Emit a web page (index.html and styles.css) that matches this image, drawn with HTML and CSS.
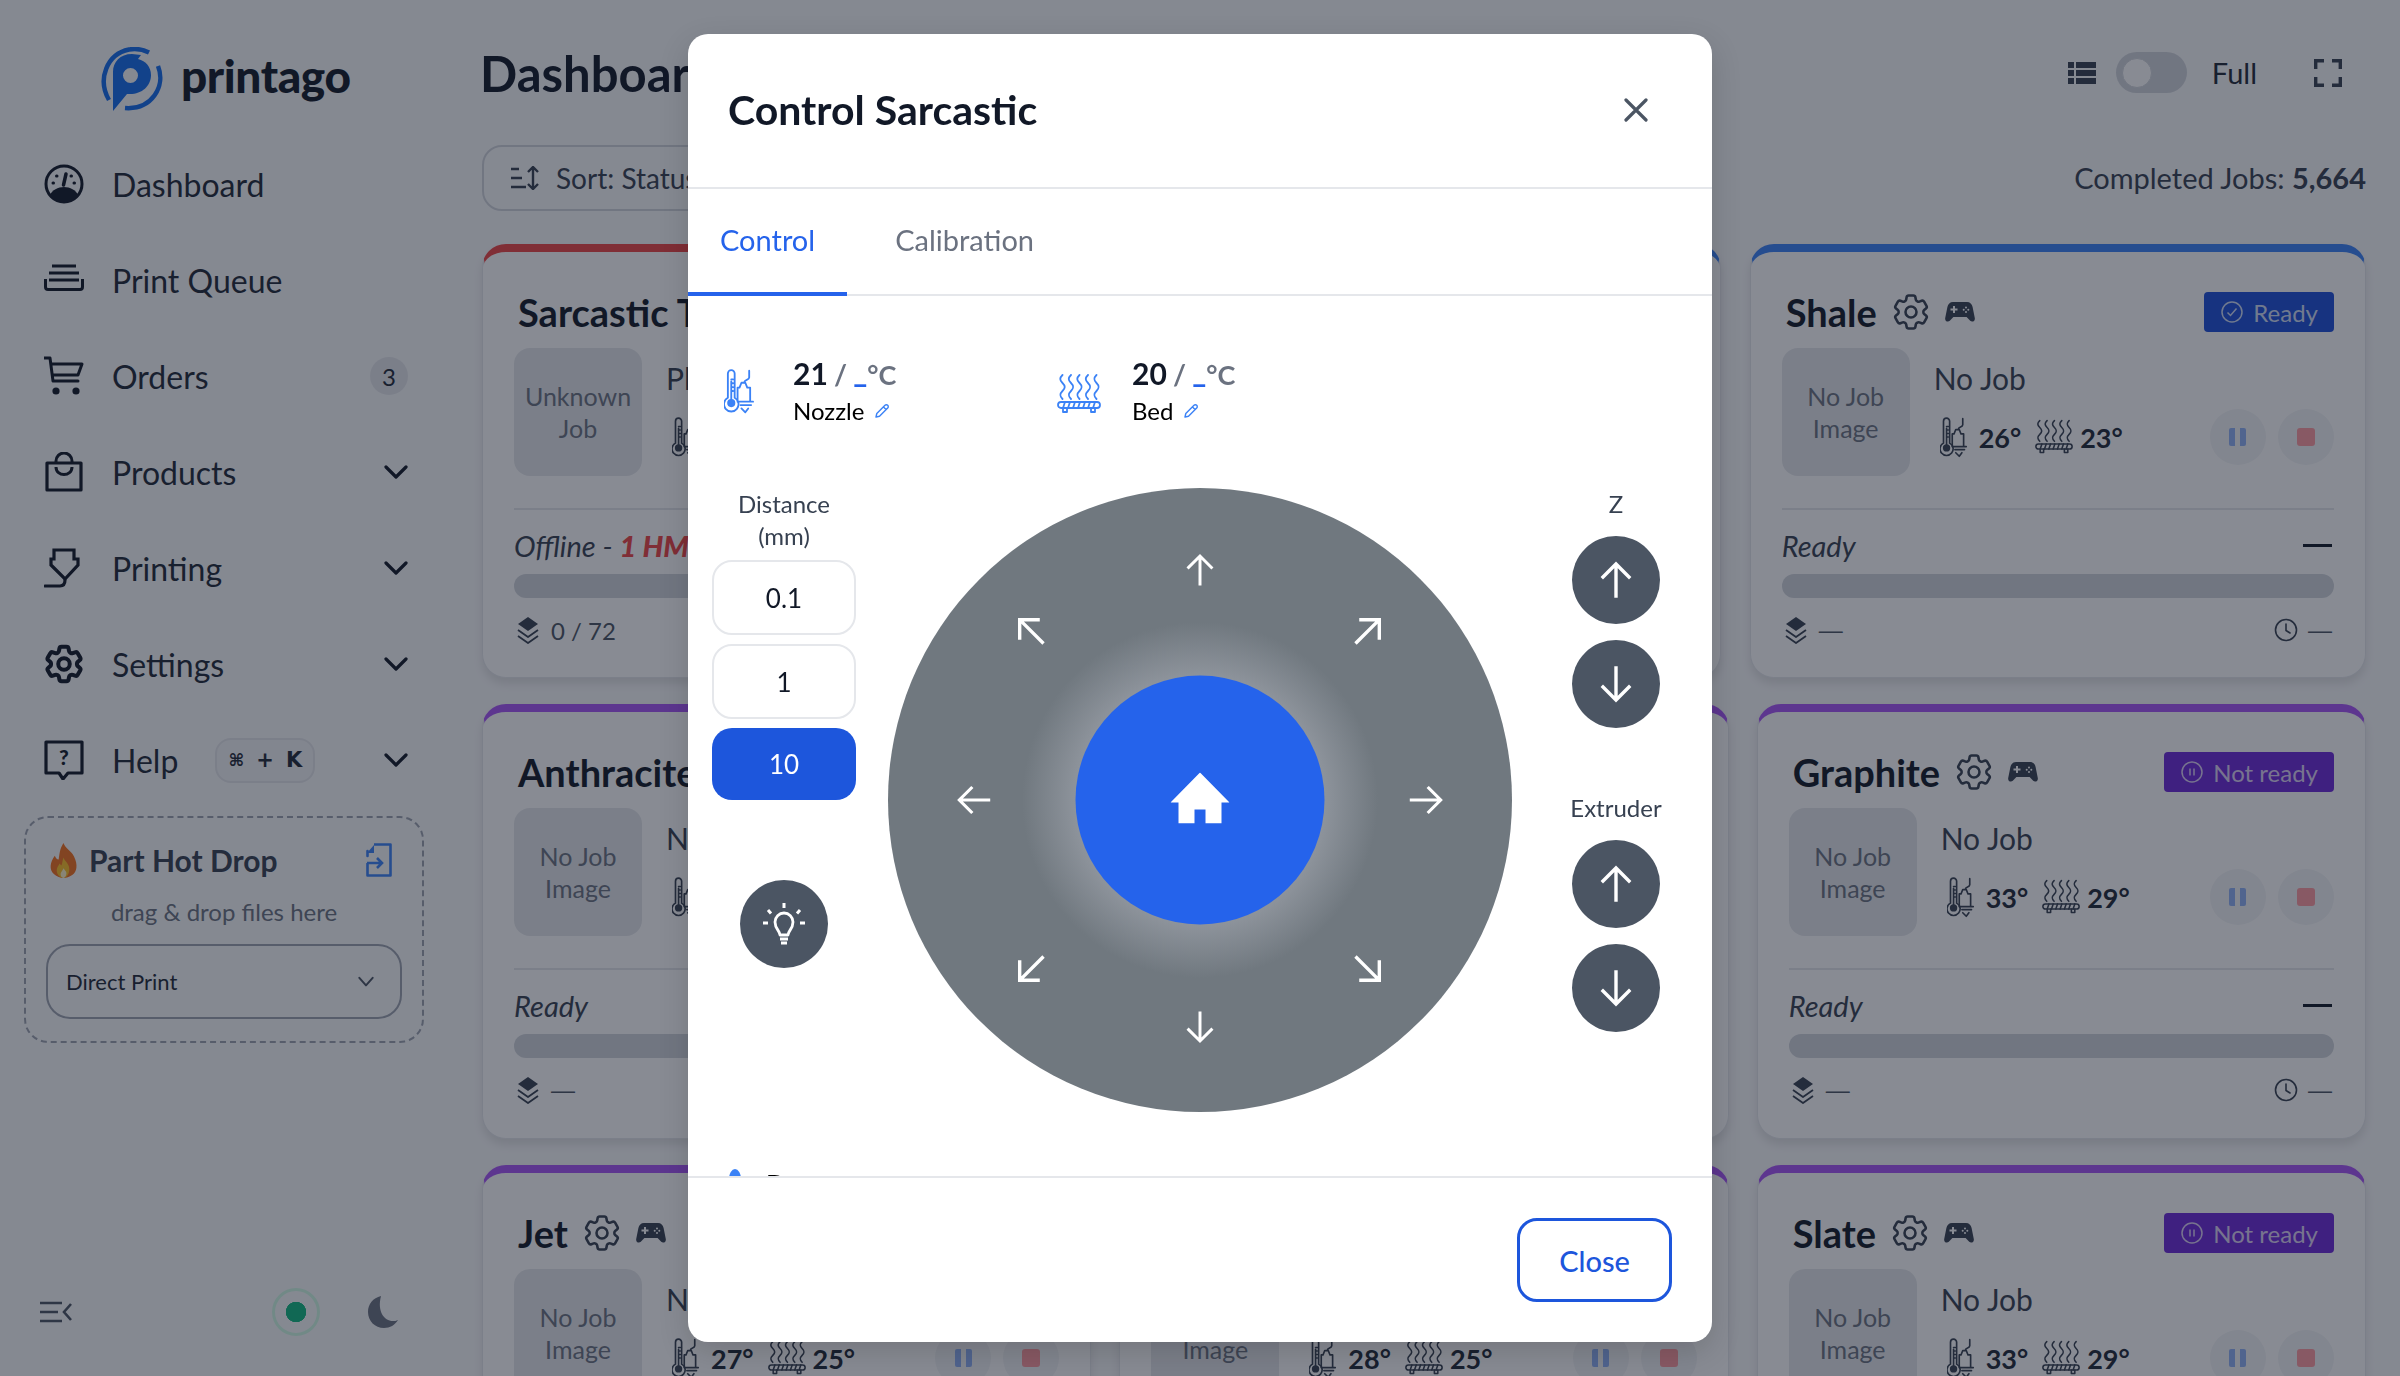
FILE: index.html

```html
<!DOCTYPE html>
<html lang="en">
<head>
  <meta charset="UTF-8">
  <title>Printago Dashboard</title>
  <link rel="stylesheet" href="styles.css">
</head>
<body>
  <svg class="icon-defs" width="0" height="0">
    <defs>
      <symbol id="i-gear" viewBox="0 0 24 24"><path fill="none" stroke="currentColor" stroke-linejoin="round" d="M9.594 3.94c.09-.542.56-.94 1.11-.94h2.593c.55 0 1.02.398 1.11.94l.213 1.281c.063.374.313.686.645.87.074.04.147.083.22.127.325.196.72.257 1.075.124l1.217-.456a1.125 1.125 0 0 1 1.37.49l1.296 2.247a1.125 1.125 0 0 1-.26 1.431l-1.003.827c-.293.241-.438.613-.43.992a7.723 7.723 0 0 1 0 .255c-.008.378.137.75.43.991l1.004.827c.424.35.534.955.26 1.43l-1.298 2.247a1.125 1.125 0 0 1-1.369.491l-1.217-.456c-.355-.133-.75-.072-1.076.124a6.47 6.47 0 0 1-.22.128c-.331.183-.581.495-.644.869l-.213 1.281c-.09.543-.56.94-1.11.94h-2.594c-.55 0-1.019-.398-1.11-.94l-.213-1.281c-.062-.374-.312-.686-.644-.87a6.52 6.52 0 0 1-.22-.127c-.325-.196-.72-.257-1.076-.124l-1.217.456a1.125 1.125 0 0 1-1.369-.49l-1.297-2.247a1.125 1.125 0 0 1 .26-1.431l1.004-.827c.292-.24.437-.613.43-.991a6.932 6.932 0 0 1 0-.255c.007-.38-.138-.751-.43-.992l-1.004-.827a1.125 1.125 0 0 1-.26-1.43l1.297-2.247a1.125 1.125 0 0 1 1.37-.491l1.216.456c.356.133.751.072 1.076-.124.072-.044.146-.086.22-.128.332-.183.582-.495.644-.869l.214-1.28Z"/><circle cx="12" cy="12" r="3" fill="none" stroke="currentColor"/></symbol>
      <symbol id="i-pad" viewBox="0 0 30 22"><path fill="currentColor" fill-rule="evenodd" d="M8 1h14c3 0 5 2 5.600 5l2.200 11c.5 3-2.600 4.600-4.600 2.800L21.600 16H8.400l-3.600 3.800C2.800 21.600-.3 20 .2 17L2.400 6C3 3 5 1 8 1ZM8 5v2.500H5.500v2H8V12h2V9.500h2.500v-2H10V5ZM21 5.500a1 1 0 1 0 0 2 1 1 0 0 0 0-2Zm-2.300 2.300a1 1 0 1 0 0 2 1 1 0 0 0 0-2Zm4.600 0a1 1 0 1 0 0 2 1 1 0 0 0 0-2ZM21 10a1 1 0 1 0 0 2 1 1 0 0 0 0-2Z"/></symbol>
      <symbol id="i-nozzle" viewBox="0 0 32 46"><g fill="none" stroke="currentColor" stroke-width="1.900" stroke-linecap="round" stroke-linejoin="round"><path d="M4 30V5a3.500 3.500 0 0 1 7 0v25a7.500 7.500 0 1 1-7 0Z"/><path d="M7.500 13v22M7.500 11h2M7.500 15h2M7.500 19h2M7.500 23h2"/><path d="M14 19.500h2l2-5h4l2 5h3v14M14 19.500v13"/><path d="M21 14c0-3 5-2 5-5V2"/><path d="M14 34h16M17 37.500h11M18 41l4 4 3-4"/></g><circle cx="7.500" cy="35.500" r="4.200" fill="currentColor"/></symbol>
      <symbol id="i-bed" viewBox="0 0 44 40"><g fill="none" stroke="currentColor" stroke-width="1.800" stroke-linecap="round" stroke-linejoin="round"><path d="M5.500 1c-3 3-3 5 0 8s3 5 0 8-3 5 0 8"/><path d="M14 1c-3 3-3 5 0 8s3 5 0 8-3 5 0 8M22.500 1c-3 3-3 5 0 8s3 5 0 8-3 5 0 8M31 1c-3 3-3 5 0 8s3 5 0 8-3 5 0 8M39.500 1c-3 3-3 5 0 8s3 5 0 8-3 5 0 8"/><rect x="1" y="28" width="42" height="6" rx="3"/><path d="M6 34l2-6M11 34l2-6M16 34l2-6M21 34l2-6M26 34l2-6M31 34l2-6M36 34l2-6M6 34v4h4v-4M34 34v4h4v-4"/></g></symbol>
      <symbol id="i-layers" viewBox="0 0 22 28"><path fill="currentColor" d="M11 1l10 7-10 7L1 8Z"/><path fill="none" stroke="currentColor" stroke-width="1.800" stroke-linejoin="round" d="M1 14l10 7 10-7M1 20l10 7 10-7"/></symbol>
      <symbol id="i-clock" viewBox="0 0 24 24"><circle cx="12" cy="12" r="10.500" fill="none" stroke="currentColor" stroke-width="1.600"/><path fill="none" stroke="currentColor" stroke-width="1.600" stroke-linecap="round" d="M12 6v6.500l4 2.500"/></symbol>
      <symbol id="i-ready" viewBox="0 0 24 24"><circle cx="12" cy="12" r="10" fill="none" stroke="currentColor" stroke-width="1.500"/><path fill="none" stroke="currentColor" stroke-width="1.500" d="M7.500 12.500l3 3 6-7"/></symbol>
      <symbol id="i-notready" viewBox="0 0 24 24"><circle cx="12" cy="12" r="10" fill="none" stroke="currentColor" stroke-width="1.500"/><path fill="none" stroke="currentColor" stroke-width="1.500" d="M10 8.500v7M14 8.500v7"/></symbol>
      <symbol id="i-chev" viewBox="0 0 24 16"><path fill="none" stroke="currentColor" stroke-width="3.200" stroke-linecap="round" stroke-linejoin="round" d="M2 3l10 10L22 3"/></symbol>
      <symbol id="i-arrow" viewBox="0 0 24 24"><path fill="none" stroke="currentColor" stroke-width="1.700" stroke-linecap="square" d="M12 20V4.500M5.500 10.500L12 4l6.500 6.500"/></symbol>
    </defs>
  </svg>

  <div class="app">
    <aside class="sidebar">
      <div class="logo">
        <svg class="logo-mark" viewBox="0 0 64 64">
          <path fill="none" stroke="currentColor" stroke-width="4.500" d="M10 53C-2 32 8 7 30 2.500c8-1.500 14 0 20 3"/>
          <path fill="none" stroke="currentColor" stroke-width="4.500" d="M59 19c8 20-6 44-33 42"/>
          <path fill="currentColor" fill-rule="evenodd" d="M14 64V25C14 15 21 7 33 7l9 1-3 4c8 2 13 8 13 16 0 11-9 19-21 19h-3ZM31.500 21a7.500 7.500 0 1 0 0 15 7.500 7.500 0 0 0 0-15Z"/>
        </svg>
        <span class="logo-text">printago</span>
      </div>

      <nav class="nav">
        <a class="nav-item">
          <svg class="nav-icon" viewBox="0 0 40 40"><circle cx="20" cy="20" r="18" fill="none" stroke="currentColor" stroke-width="3"/><path fill="currentColor" d="M6 31c2-5 8-8 14-8s12 3 14 8c-3 4-8 7-14 7S9 35 6 31Z"/><path fill="none" stroke="currentColor" stroke-width="3.500" stroke-linecap="round" d="M19.500 21l2.500-11"/><path fill="none" stroke="currentColor" stroke-width="3" stroke-linecap="round" d="M9 19h.5M12.500 12h.5M30 19h.5M27 12h.5"/></svg>
          <span>Dashboard</span>
        </a>
        <a class="nav-item">
          <svg class="nav-icon" viewBox="0 0 40 40"><path fill="none" stroke="currentColor" stroke-width="3" d="M8 6h24M5 13h30M5 20h30"/><path fill="none" stroke="currentColor" stroke-width="3" stroke-linejoin="round" d="M1.500 19v8c0 1.500 1 2.500 2.500 2.500h32c1.500 0 2.500-1 2.500-2.500v-8"/></svg>
          <span>Print Queue</span>
        </a>
        <a class="nav-item">
          <svg class="nav-icon" viewBox="0 0 40 40"><path fill="none" stroke="currentColor" stroke-width="3" stroke-linejoin="round" stroke-linecap="round" d="M0 2h6l3 23h25M7 8h31l-4 11H9"/><circle cx="12" cy="35" r="3.600" fill="currentColor"/><circle cx="32" cy="35" r="3.600" fill="currentColor"/></svg>
          <span>Orders</span>
          <span class="count">3</span>
        </a>
        <a class="nav-item">
          <svg class="nav-icon" viewBox="0 0 40 40"><path fill="none" stroke="currentColor" stroke-width="3.200" stroke-linejoin="round" d="M3 11h34v27H3Z"/><path fill="none" stroke="currentColor" stroke-width="3" d="M12 11V9a8 8 0 0 1 16 0v2M12 15c0 10 16 10 16 0"/></svg>
          <span>Products</span>
          <svg class="chev"><use href="#i-chev"/></svg>
        </a>
        <a class="nav-item">
          <svg class="nav-icon" viewBox="0 0 40 40"><path fill="none" stroke="currentColor" stroke-width="3.200" stroke-linejoin="miter" d="M10 2h20v9h4v6L21 31 7 17v-6h3Z"/><path fill="none" stroke="currentColor" stroke-width="3.200" stroke-linecap="round" d="M1 38h15c3 0 5-2 5-6"/></svg>
          <span>Printing</span>
          <svg class="chev"><use href="#i-chev"/></svg>
        </a>
        <a class="nav-item">
          <svg class="nav-icon nav-icon-gear"><use href="#i-gear"/></svg>
          <span>Settings</span>
          <svg class="chev"><use href="#i-chev"/></svg>
        </a>
        <a class="nav-item">
          <svg class="nav-icon" viewBox="0 0 40 40"><path fill="none" stroke="currentColor" stroke-width="3.200" stroke-linejoin="round" d="M2 2h36v31H24l-5 6-4-6H2Z"/><text class="help-mark" x="20" y="25" text-anchor="middle">?</text></svg>
          <span>Help</span>
          <kbd class="shortcut"><span class="shortcut-cmd">⌘</span><span>+</span><span>K</span></kbd>
          <svg class="chev"><use href="#i-chev"/></svg>
        </a>
      </nav>

      <section class="hot-drop">
        <div class="hot-drop-head">
          <svg class="flame" viewBox="0 0 30 36"><path fill="#f2701d" d="M15 0c2 6 8 8 11 14 4 8 3 16-2 19-3 2-6 3-9 3s-7-1-10-4C0 27 1 20 6 13c1 2 2 4 4 4 1-6 1-11 5-17Z"/><path fill="#fbbf24" d="M15 15c1 4 6 6 6 12 0 5-3 9-6 9s-7-3-7-8c0-3 2-5 3-7 1 1 1 2 2 2 1-3 1-5 2-8Z"/><path fill="#fff3c4" d="M15 26c1 2 3 3 3 5s-1 5-3 5-3-2-3-4 2-3 3-6Z"/></svg>
          <span class="hot-drop-title">Part Hot Drop</span>
          <svg class="drop-doc" viewBox="0 0 26 34"><path fill="none" stroke="currentColor" stroke-width="2.600" stroke-linejoin="round" d="M8 1.500h16.500v31h-23V20M1.500 13V8Z"/><path fill="currentColor" d="M1 10l7-8v8Z"/><path fill="none" stroke="currentColor" stroke-width="2.600" d="M1 20h14M11 15l5 5-5 5"/></svg>
        </div>
        <p class="hot-drop-hint">drag &amp; drop files here</p>
        <div class="select">
          <span>Direct Print</span>
          <svg class="select-chev" viewBox="0 0 24 16"><path fill="none" stroke="currentColor" stroke-width="2.400" stroke-linecap="round" stroke-linejoin="round" d="M4 3l8 9 8-9"/></svg>
        </div>
      </section>

      <div class="side-foot">
        <svg class="collapse" viewBox="0 0 32 22"><path fill="none" stroke="currentColor" stroke-width="2.600" d="M0 2h22M0 11h18M0 20h22"/><path fill="none" stroke="currentColor" stroke-width="2.600" d="M31 3l-7 8 7 8"/></svg>
        <span class="status-dot"></span>
        <svg class="moon" viewBox="0 0 30 32"><path fill="currentColor" d="M13 0C5 2 0 8 0 16c0 9 7 16 16 16 6 0 11-3 14-8-2 1-3 1-5 1C16 25 9 15 13 0Z"/></svg>
      </div>
    </aside>

    <main class="main">
      <header class="page-head">
        <h1>Dashboard</h1>
        <div class="view-tools">
          <svg class="tool-list" viewBox="0 0 28 22"><path fill="currentColor" d="M0 0h6v6H0ZM8 0h20v6H8ZM0 8h6v6H0ZM8 8h20v6H8ZM0 16h6v6H0ZM8 16h20v6H8Z"/></svg>
          <span class="toggle"><span class="knob"></span></span>
          <span class="toggle-label">Full</span>
          <svg class="tool-full" viewBox="0 0 28 28"><path fill="none" stroke="currentColor" stroke-width="3.400" d="M1.700 10V1.700H10M18 1.700h8.300V10M26.300 18v8.300H18M10 26.300H1.700V18"/></svg>
        </div>
      </header>

      <div class="toolbar">
        <button class="sort-btn">
          <svg class="sort-icon" viewBox="0 0 28 24"><path fill="none" stroke="currentColor" stroke-width="2.400" d="M0 3h8M0 12h11M0 21h15"/><path fill="none" stroke="currentColor" stroke-width="2.400" d="M22 1v22M17 6l5-5 5 5M17 18l5 5 5-5"/></svg>
          <span>Sort: Status</span>
        </button>
        <div class="completed">Completed Jobs: <b>5,664</b></div>
      </div>

      <div class="printer-grid" id="printers"></div>
    </main>
  </div>

  <div class="overlay">
    <div class="modal">
      <div class="modal-head">
        <h2>Control Sarcastic</h2>
        <svg class="modal-x" viewBox="0 0 24 24"><path fill="none" stroke="currentColor" stroke-width="3.200" stroke-linecap="round" d="M2 2l20 20M22 2L2 22"/></svg>
      </div>

      <div class="tabs">
        <span class="tab tab-active">Control</span>
        <span class="tab">Calibration</span>
      </div>

      <div class="modal-body">
        <div class="temps">
          <div class="temp temp-nozzle">
            <svg class="temp-icon-nozzle"><use href="#i-nozzle"/></svg>
            <div>
              <div class="temp-val"><b>21</b> <i>/</i> <u>_</u><em>°C</em></div>
              <div class="temp-name">Nozzle <svg class="pencil" viewBox="0 0 16 16"><path fill="none" stroke="currentColor" stroke-width="1.400" stroke-linejoin="round" d="M2 14l.8-3.500L11 2.300a1.500 1.500 0 0 1 2.700 2.700L5.500 13.200ZM9.500 4l2.500 2.500"/></svg></div>
            </div>
          </div>
          <div class="temp temp-bed">
            <svg class="temp-icon-bed"><use href="#i-bed"/></svg>
            <div>
              <div class="temp-val"><b>20</b> <i>/</i> <u>_</u><em>°C</em></div>
              <div class="temp-name">Bed <svg class="pencil" viewBox="0 0 16 16"><path fill="none" stroke="currentColor" stroke-width="1.400" stroke-linejoin="round" d="M2 14l.8-3.500L11 2.300a1.500 1.500 0 0 1 2.700 2.700L5.500 13.200ZM9.500 4l2.500 2.500"/></svg></div>
            </div>
          </div>
        </div>

        <div class="controls">
          <div class="distance">
            <div class="ctl-label">Distance<br>(mm)</div>
            <div class="dist-btn">0.1</div>
            <div class="dist-btn">1</div>
            <div class="dist-btn dist-active">10</div>
            <div class="round-btn bulb">
              <svg viewBox="0 0 48 48"><path fill="none" stroke="currentColor" stroke-width="2.800" stroke-linejoin="round" d="M20 35c0-4-5-6-5-13a9 9 0 0 1 18 0c0 7-5 9-5 13Z"/><path fill="none" stroke="currentColor" stroke-width="3" d="M20 39h8M21 43h6M24 3v5M8 10l3 3.500M40 10l-3 3.500M3 23h5M40 23h5"/></svg>
            </div>
          </div>

          <div class="dial">
            <svg class="dir dir-n"><use href="#i-arrow"/></svg>
            <svg class="dir dir-ne"><use href="#i-arrow"/></svg>
            <svg class="dir dir-e"><use href="#i-arrow"/></svg>
            <svg class="dir dir-se"><use href="#i-arrow"/></svg>
            <svg class="dir dir-s"><use href="#i-arrow"/></svg>
            <svg class="dir dir-sw"><use href="#i-arrow"/></svg>
            <svg class="dir dir-w"><use href="#i-arrow"/></svg>
            <svg class="dir dir-nw"><use href="#i-arrow"/></svg>
            <div class="home">
              <svg viewBox="0 0 59 51"><path fill="currentColor" d="M29.500 0L59 30H51V51H35V37H24V51H8V30H0Z"/></svg>
            </div>
          </div>

          <div class="axes">
            <div class="ctl-label">Z</div>
            <div class="round-btn"><svg class="axis-arrow"><use href="#i-arrow"/></svg></div>
            <div class="round-btn"><svg class="axis-arrow arrow-down"><use href="#i-arrow"/></svg></div>
            <div class="ctl-label extruder-label">Extruder</div>
            <div class="round-btn"><svg class="axis-arrow"><use href="#i-arrow"/></svg></div>
            <div class="round-btn"><svg class="axis-arrow arrow-down"><use href="#i-arrow"/></svg></div>
          </div>
        </div>

        <div class="part-row"><span class="part-dot"></span><span>Part</span></div>
      </div>

      <div class="modal-foot">
        <button class="close-btn">Close</button>
      </div>
    </div>
  </div>

  <script>
    const printers = [
      { name: "Sarcastic T", accent: "red", job: "Pl", img: "Unknown Job", nozzle: 31, bed: 24, state: "Offline", hms: "1 HMS", badge: "offline", layers: "0 / 72" },
      { name: "Basalt", accent: "blue", job: "No Job", img: "No Job Image", nozzle: 25, bed: 24, state: "Ready", badge: "ready" },
      { name: "Shale", accent: "blue", job: "No Job", img: "No Job Image", nozzle: 26, bed: 23, state: "Ready", badge: "ready" },
      { name: "Anthracite", accent: "purple", job: "No Job", img: "No Job Image", nozzle: 27, bed: 25, state: "Ready", badge: "notready" },
      { name: "Onyx", accent: "purple", job: "No Job", img: "No Job Image", nozzle: 30, bed: 26, state: "Ready", badge: "notready" },
      { name: "Graphite", accent: "purple", job: "No Job", img: "No Job Image", nozzle: 33, bed: 29, state: "Ready", badge: "notready" },
      { name: "Jet", accent: "purple", job: "No Job", img: "No Job Image", nozzle: 27, bed: 25, state: "Ready", badge: "notready" },
      { name: "Flint", accent: "purple", job: "No Job", img: "No Job Image", nozzle: 28, bed: 25, state: "Ready", badge: "notready" },
      { name: "Slate", accent: "purple", job: "No Job", img: "No Job Image", nozzle: 33, bed: 29, state: "Ready", badge: "notready" }
    ];

    const badgeText = { ready: "Ready", notready: "Not ready", offline: "Offline" };

    let html = "";
    printers.forEach(p => {
      const icon = p.badge === "ready" ? "i-ready" : "i-notready";
      html += `
        <article class="card card-${p.accent}">
          <div class="card-head">
            <span class="card-name">${p.name}</span>
            <svg class="card-gear"><use href="#i-gear"/></svg>
            <svg class="card-pad"><use href="#i-pad"/></svg>
            <span class="badge badge-${p.badge}"><svg class="badge-icon"><use href="#${icon}"/></svg>${badgeText[p.badge]}</span>
          </div>
          <div class="card-body">
            <div class="job-img"><span>${p.img}</span></div>
            <div class="job-info">
              <div class="job-name">${p.job}</div>
              <div class="job-temps">
                <svg class="mini-nozzle"><use href="#i-nozzle"/></svg><b>${p.nozzle}°</b>
                <svg class="mini-bed"><use href="#i-bed"/></svg><b>${p.bed}°</b>
                <span class="job-btns">
                  <span class="job-btn"><span class="pause"></span></span>
                  <span class="job-btn"><span class="stop"></span></span>
                </span>
              </div>
            </div>
          </div>
          <div class="card-status">
            <span class="state">${p.state}${p.hms ? ` - <b>${p.hms}</b>` : ""}</span>
            <span class="state-dash"></span>
          </div>
          <div class="progress"></div>
          <div class="card-foot">
            <svg class="foot-layers"><use href="#i-layers"/></svg>${p.layers ? `<span class="foot-val">${p.layers}</span>` : `<span class="foot-dash">—</span>`}
            <svg class="foot-clock"><use href="#i-clock"/></svg><span class="foot-dash">—</span>
          </div>
        </article>`;
    });
    document.getElementById("printers").innerHTML = html;
  </script>
</body>
</html>
```

FILE: styles.css

```css
* {
  box-sizing: border-box;
}
html, body {
  margin: 0;
  height: 100%;
  overflow: hidden;
}
body {
  font-family: Lato, "Noto Sans", sans-serif;
  background-color: #f9fafb;
  color: #1f2937;
}
.icon-defs {
  position: absolute;
}
.app {
  display: flex;
  height: 1376px;
}

/* sidebar */
.sidebar {
  width: 482px;
  flex: none;
  display: flex;
  flex-direction: column;
  padding-left: 24px;
  padding-right: 58px;
}
.logo {
  height: 136px;
  display: flex;
  align-items: center;
  padding-left: 75px;
  padding-top: 22px;
  gap: 18px;
}
.logo-mark {
  width: 64px;
  height: 64px;
  color: #136ced;
}
.logo-text {
  font-size: 46px;
  font-weight: 900;
  color: #111827;
  letter-spacing: -0.4px;
  padding-bottom: 8px;
}
.nav-item {
  height: 96px;
  display: flex;
  align-items: center;
  padding: 0 16px 0 20px;
  font-size: 32px;
  color: #1f2937;
}
.nav-icon {
  width: 40px;
  height: 40px;
  margin-right: 28px;
  flex: none;
  color: #111827;
}
.nav-icon-gear {
  width: 46px;
  height: 46px;
  margin-left: -3px;
  margin-right: 25px;
  stroke-width: 2.1;
}
.chev {
  width: 24px;
  height: 16px;
  margin-left: auto;
  color: #111827;
}
.count {
  margin-left: auto;
  width: 38px;
  height: 38px;
  border-radius: 50%;
  background-color: #e5e7eb;
  display: flex;
  align-items: center;
  justify-content: center;
  font-size: 24px;
}
.help-mark {
  font-family: Lato, sans-serif;
  font-size: 21px;
  font-weight: 900;
  fill: currentColor;
}
.shortcut {
  margin-left: 37px;
  width: 100px;
  height: 45px;
  border: 2px solid #e5e7eb;
  border-radius: 16px;
  background-color: #f3f4f6;
  display: flex;
  align-items: center;
  justify-content: center;
  gap: 12px;
  font-family: "DejaVu Sans", sans-serif;
  font-size: 21px;
  font-weight: 700;
  color: #1f2937;
}
.shortcut-cmd {
  font-size: 17px;
}
.hot-drop {
  margin-top: 8px;
  height: 227px;
  border: 2px dashed #9ca3af;
  border-radius: 24px;
  padding: 18px 20px 0;
}
.hot-drop-head {
  display: flex;
  align-items: center;
  height: 48px;
}
.flame {
  width: 29px;
  height: 35px;
  margin-left: 3px;
  margin-right: 11px;
}
.hot-drop-title {
  font-size: 30px;
  font-weight: 700;
  color: #374151;
}
.drop-doc {
  width: 26px;
  height: 34px;
  margin-left: auto;
  margin-right: 10px;
  color: #3b82f6;
}
.hot-drop-hint {
  margin: 12px 0 16px;
  text-align: center;
  font-size: 24px;
  line-height: 32px;
  color: #6b7280;
}
.select {
  height: 75px;
  border: 2px solid #9ca3af;
  border-radius: 24px;
  display: flex;
  align-items: center;
  justify-content: space-between;
  padding: 0 24px 0 18px;
  font-size: 22px;
  color: #1f2937;
}
.select-chev {
  width: 20px;
  height: 14px;
  color: #4b5563;
}
.side-foot {
  margin-top: auto;
  padding-bottom: 40px;
  padding-left: 16px;
  display: flex;
  align-items: center;
}
.collapse {
  width: 32px;
  height: 22px;
  color: #4b5563;
}
.status-dot {
  width: 48px;
  height: 48px;
  margin-left: 200px;
  border-radius: 50%;
  border: 3px solid #d1fae5;
  background: radial-gradient(circle, #10b981 0 10px, transparent 10.500px);
}
.moon {
  width: 30px;
  height: 32px;
  margin-left: 48px;
  color: #6b7280;
}

/* main */
.main {
  flex: 1;
  min-width: 0;
  padding-right: 34px;
}
.page-head {
  height: 145px;
  display: flex;
  align-items: center;
  justify-content: space-between;
}
h1 {
  margin: 0 0 0 -2px;
  font-size: 49px;
  font-weight: 700;
  color: #111827;
}
.view-tools {
  display: flex;
  align-items: center;
  color: #1f2937;
  padding-right: 24px;
}
.tool-list {
  width: 28px;
  height: 22px;
  color: #374151;
}
.toggle {
  width: 71px;
  height: 41px;
  margin-left: 20px;
  border-radius: 21px;
  background-color: #d1d5db;
  padding: 6px;
}
.knob {
  display: block;
  width: 30px;
  height: 30px;
  border-radius: 50%;
  background-color: #fff;
  border: 1px solid #d1d5db;
}
.toggle-label {
  margin-left: 25px;
  font-size: 29px;
}
.tool-full {
  width: 28px;
  height: 28px;
  margin-left: 57px;
  color: #374151;
}
.toolbar {
  height: 66px;
  display: flex;
  align-items: center;
  justify-content: space-between;
  margin-bottom: 33px;
}
.sort-btn {
  height: 66px;
  width: 320px;
  border: 2px solid #d1d5db;
  border-radius: 20px;
  background: none;
  display: flex;
  align-items: center;
  gap: 17px;
  padding-left: 27px;
  font-family: inherit;
  font-size: 28px;
  color: #374151;
}
.sort-icon {
  width: 28px;
  height: 24px;
}
.completed {
  font-size: 29px;
  padding-bottom: 2px;
  color: #374151;
}
.completed b {
  font-weight: 700;
}
.printer-grid {
  display: grid;
  grid-template-columns: 1fr 1fr 1fr;
  grid-template-rows: 434px 435px 437px;
  column-gap: 28px;
  row-gap: 26px;
}
.card {
  background-color: #fff;
  border: 1px solid #e5e7eb;
  border-top: 8px solid #a855f7;
  border-radius: 24px;
  padding: 32px 31px 0;
  box-shadow: 0 6px 10px rgba(0,0,0,0.1);
}
.card:nth-child(2) {
  margin-right: 8px;
}
.card:nth-child(3) {
  margin-left: -7px;
}
.card-red { border-top-color: #ef4444; }
.card-blue { border-top-color: #3b82f6; }
.card-purple { border-top-color: #a855f7; }

.card-head {
  height: 56px;
  display: flex;
  align-items: center;
  padding-left: 4px;
  margin-bottom: 8px;
}
.card-name {
  font-size: 38px;
  font-weight: 700;
  color: #111827;
}
.card-gear {
  width: 44px;
  height: 44px;
  margin-left: 12px;
  color: #374151;
  stroke-width: 1.4;
}
.card-pad {
  width: 30px;
  height: 22px;
  margin-left: 12px;
  color: #374151;
}
.badge {
  margin-left: auto;
  height: 40px;
  border-radius: 4px;
  display: flex;
  align-items: center;
  padding: 0 16px;
  font-size: 24px;
  color: #fff;
  background-color: #6d28d9;
}
.badge-ready { background-color: #1d4ed8; color: #cfdcf5; }
.badge-notready { background-color: #6d28d9; color: #ddd0f5; }
.badge-offline { background-color: #dc2626; color: #fee2e2; }
.badge-icon {
  width: 24px;
  height: 24px;
  margin-right: 9px;
}
.card-body {
  display: flex;
  height: 128px;
}
.job-img {
  width: 128px;
  height: 128px;
  flex: none;
  border-radius: 16px;
  background-color: #e5e7eb;
  display: flex;
  align-items: center;
  justify-content: center;
  text-align: center;
  font-size: 25px;
  line-height: 32px;
  color: #6b7280;
  padding: 0 20px;
}
.job-info {
  flex: 1;
  min-width: 0;
  padding-left: 24px;
}
.job-name {
  margin-top: 12px;
  font-size: 30px;
  line-height: 36px;
  color: #374151;
}
.job-temps {
  margin-top: 13px;
  height: 56px;
  display: flex;
  align-items: center;
  padding-left: 6px;
  font-size: 27px;
  color: #1f2937;
}
.job-temps b {
  font-weight: 700;
}
.mini-nozzle {
  width: 28px;
  height: 42px;
  margin-right: 11px;
  color: #374151;
}
.mini-bed {
  width: 38px;
  height: 36px;
  margin-left: 14px;
  margin-right: 7px;
  color: #374151;
}
.job-btns {
  margin-left: auto;
  display: flex;
  gap: 12px;
}
.job-btn {
  width: 56px;
  height: 56px;
  border-radius: 50%;
  background-color: #f3f4f6;
  display: flex;
  align-items: center;
  justify-content: center;
}
.pause {
  width: 17px;
  height: 18px;
  border-left: 6px solid #8fb0f5;
  border-right: 6px solid #8fb0f5;
  border-radius: 2px;
}
.stop {
  width: 18px;
  height: 18px;
  border-radius: 3px;
  background-color: #ff9aa0;
}
.card-status {
  margin-top: 32px;
  padding-top: 15px;
  border-top: 2px solid #e5e7eb;
  display: flex;
  align-items: center;
  justify-content: space-between;
  height: 58px;
}
.state {
  font-size: 29px;
  font-style: italic;
  color: #374151;
}
.state b {
  color: #ef4444;
  font-weight: 900;
}
.state-dash {
  width: 29px;
  height: 3px;
  margin-right: 2px;
  background-color: #111827;
}
.progress {
  margin-top: 8px;
  height: 24px;
  border-radius: 12px;
  background-color: #d1d5db;
}
.card-foot {
  margin-top: 17px;
  height: 30px;
  display: flex;
  align-items: center;
  padding-left: 3px;
  padding-right: 2px;
  color: #4b5563;
}
.foot-layers {
  width: 22px;
  height: 28px;
  margin-right: 12px;
  color: #374151;
}
.foot-clock {
  width: 24px;
  height: 24px;
  margin-left: auto;
  margin-right: 10px;
  color: #374151;
}
.foot-val {
  font-size: 24px;
}
.foot-dash {
  font-family: "Liberation Sans", sans-serif;
  font-size: 24px;
}

/* modal */
.overlay {
  position: fixed;
  inset: 0;
  background-color: rgba(17,24,39,0.5);
  display: flex;
  align-items: center;
  justify-content: center;
}
.modal {
  width: 1024px;
  height: 1308px;
  background-color: #fff;
  border-radius: 20px;
  display: flex;
  flex-direction: column;
  box-shadow: 0 10px 30px rgba(0,0,0,0.15);
  overflow: hidden;
}
.modal-head {
  height: 155px;
  flex: none;
  border-bottom: 2px solid #e5e7eb;
  display: flex;
  align-items: center;
  justify-content: space-between;
  padding: 0 64px 2px 40px;
}
h2 {
  margin: 0;
  font-size: 41px;
  font-weight: 700;
  color: #111827;
}
.modal-x {
  width: 24px;
  height: 24px;
  color: #4b5563;
}
.tabs {
  height: 107px;
  flex: none;
  border-bottom: 2px solid #e5e7eb;
  display: flex;
}
.tab {
  height: 107px;
  padding: 0 32px 6px;
  display: flex;
  align-items: center;
  font-size: 29px;
  color: #6b7280;
}
.tab-active {
  color: #2563eb;
  border-bottom: 4px solid #2563eb;
  padding-bottom: 2px;
  margin-right: 16px;
}
.modal-body {
  flex: 1;
  min-height: 0;
  overflow: hidden;
  padding: 57px 0 0 24px;
}
.temps {
  display: flex;
  height: 72px;
  margin-bottom: 63px;
}
.temp {
  display: flex;
  align-items: center;
  color: #111827;
}
.temp-nozzle {
  width: 345px;
  padding-left: 12px;
}
.temp-icon-nozzle {
  width: 31px;
  height: 46px;
  margin: 4px 38px 0 0;
  color: #3b82f6;
}
.temp-icon-bed {
  width: 44px;
  height: 40px;
  margin: 10px 31px 0 0;
  color: #3b82f6;
}
.temp-val {
  font-size: 24px;
  line-height: 36px;
  color: #6b7280;
}
.temp-val b {
  font-size: 30px;
  font-weight: 700;
  color: #111827;
}
.temp-val i {
  font-style: normal;
  font-size: 28px;
  font-weight: 700;
}
.temp-val u {
  text-decoration: none;
  font-size: 30px;
  font-weight: 900;
  color: #2563eb;
  vertical-align: 3px;
}
.temp-val em {
  font-style: normal;
  font-size: 27px;
  font-weight: 700;
}
.temp-name {
  margin-top: 1px;
  font-size: 24px;
  line-height: 32px;
  color: #000;
  display: flex;
  align-items: center;
}
.pencil {
  width: 16px;
  height: 16px;
  margin-left: 10px;
  color: #3b82f6;
}
.controls {
  display: flex;
  height: 624px;
}
.distance {
  width: 144px;
  flex: none;
  display: flex;
  flex-direction: column;
  align-items: center;
}
.ctl-label {
  text-align: center;
  font-size: 24px;
  line-height: 32px;
  color: #374151;
}
.dist-btn {
  width: 144px;
  height: 75px;
  margin-top: 9px;
  border: 2px solid #e5e7eb;
  border-radius: 20px;
  display: flex;
  align-items: center;
  justify-content: center;
  font-size: 26px;
  color: #111827;
}
.distance .ctl-label + .dist-btn {
  margin-top: 8px;
}
.dist-active {
  height: 72px;
  border: none;
  background-color: #1d56dc;
  color: #fff;
}
.round-btn {
  width: 88px;
  height: 88px;
  flex: none;
  border-radius: 50%;
  background-color: #4b5563;
  color: #fff;
  display: flex;
  align-items: center;
  justify-content: center;
}
.bulb {
  margin-top: 80px;
}
.bulb svg {
  width: 48px;
  height: 48px;
}
.dial {
  position: relative;
  width: 624px;
  height: 624px;
  flex: none;
  margin: 0 60px 0 32px;
  border-radius: 50%;
  background: radial-gradient(circle closest-side, #a3a9b1 0, #8d939b 40%, #70787f 57%, #70787f 100%);
  color: #fff;
}
.home {
  position: absolute;
  top: 50%;
  left: 50%;
  width: 249px;
  height: 249px;
  transform: translate(-50%, -50%);
  border-radius: 50%;
  background-color: #2563eb;
  display: flex;
  align-items: center;
  justify-content: center;
}
.home svg {
  width: 59px;
  height: 51px;
  margin-top: -4px;
}
.dir {
  position: absolute;
  width: 48px;
  height: 48px;
  margin: -24px 0 0 -24px;
}
.dir-n { left: 312px; top: 82px; width: 42px; height: 42px; margin: -21px 0 0 -21px; }
.dir-s { left: 312px; top: 539px; width: 42px; height: 42px; margin: -21px 0 0 -21px; transform: rotate(180deg); }
.dir-e { left: 538px; top: 312px; width: 44px; height: 44px; margin: -22px 0 0 -22px; transform: rotate(90deg); }
.dir-w { left: 86px; top: 312px; width: 44px; height: 44px; margin: -22px 0 0 -22px; transform: rotate(270deg); }
.dir-ne { left: 480px; top: 143px; transform: rotate(45deg); }
.dir-se { left: 480px; top: 481px; transform: rotate(135deg); }
.dir-sw { left: 143px; top: 481px; transform: rotate(225deg); }
.dir-nw { left: 143px; top: 143px; transform: rotate(315deg); }
.axes {
  width: 88px;
  flex: none;
  display: flex;
  flex-direction: column;
  align-items: center;
  gap: 16px;
}
.extruder-label {
  margin-top: 48px;
}
.axis-arrow {
  width: 48px;
  height: 48px;
}
.arrow-down {
  transform: rotate(180deg);
}
.part-row {
  margin-top: 57px;
  display: flex;
  align-items: flex-start;
  font-size: 28px;
  line-height: 32px;
  font-weight: 700;
  color: #000;
  padding-left: 17px;
}
.part-dot {
  width: 12px;
  height: 20px;
  margin-right: 25px;
  border-radius: 50%;
  background-color: #3b82f6;
}
.modal-foot {
  height: 166px;
  flex: none;
  border-top: 2px solid #e5e7eb;
  display: flex;
  align-items: center;
  justify-content: flex-end;
  padding-right: 40px;
}
.close-btn {
  width: 155px;
  height: 84px;
  border: 3px solid #1d56dc;
  border-radius: 20px;
  background: #fff;
  font-family: inherit;
  font-size: 29px;
  font-weight: 500;
  color: #1d56dc;
}
```
